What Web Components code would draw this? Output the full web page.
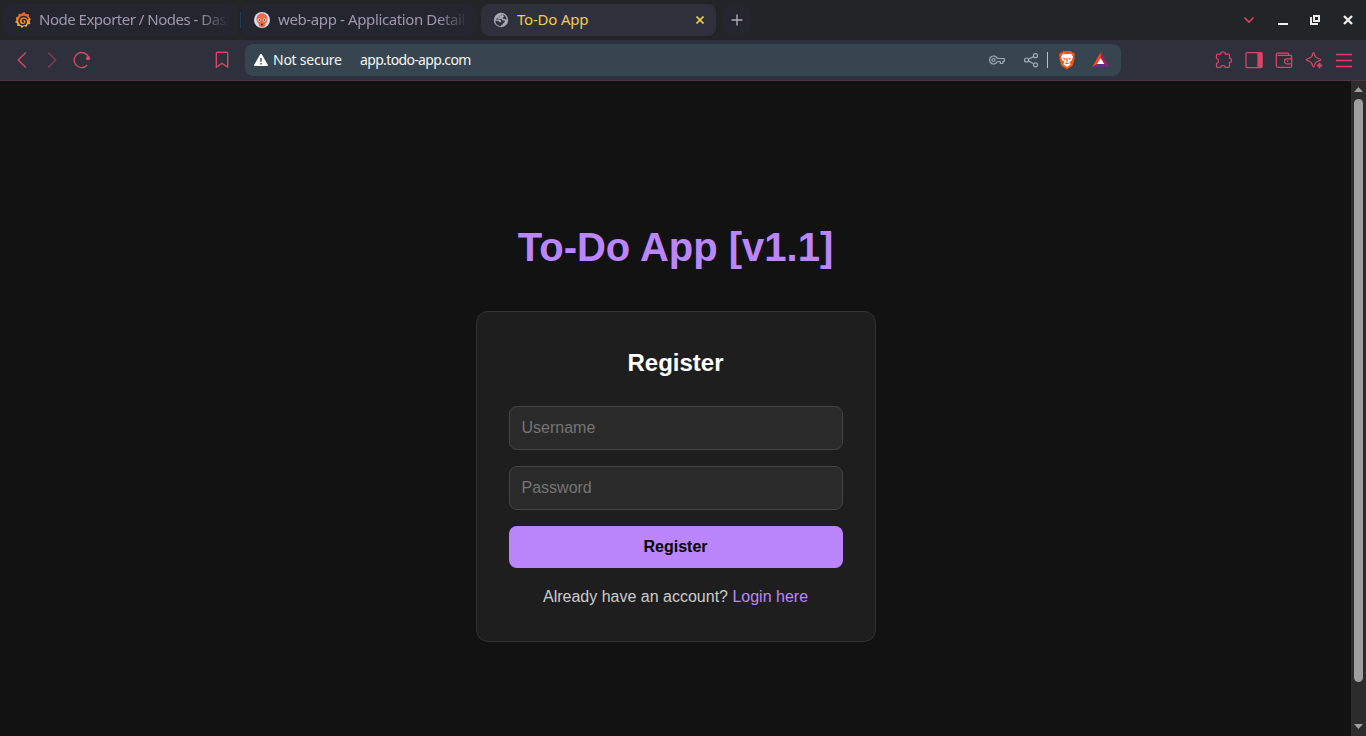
<!DOCTYPE html>
<html lang="en"><head><meta charset="utf-8"><title>To-Do App</title>
<style>
html,body{margin:0;height:100%;overflow:hidden;background:#121212}
</style></head><body>
<browser-window></browser-window>
<script>
const define=(name,html)=>{
  const t=document.createElement('template');t.innerHTML=html;
  customElements.define(name,class extends HTMLElement{
    constructor(){super();this.attachShadow({mode:'open'}).append(t.content.cloneNode(true));}
  });
};

define('tab-item',`<style>
:host{display:flex;align-items:center;box-sizing:border-box;width:235px;height:32px;border-radius:8px;background:#23262f;color:#a397ae;padding:0 9px 0 12px;font:15px/30px "Noto Sans",sans-serif}
:host([active]){background:#2e313c;color:#f0cb4c;padding-right:12px}
.icon{width:16px;height:16px;flex:none;margin-right:8px;display:block}
.title{flex:1;height:32px;overflow:hidden;white-space:nowrap;letter-spacing:var(--track,0)}
:host(:not([active])) .title{-webkit-mask-image:linear-gradient(90deg,#000 calc(100% - 30px),transparent)}
</style><span class="icon"><slot name="icon"></slot></span><span class="title"><slot></slot></span><slot name="close"></slot>`);

define('window-controls',`<style>:host{display:block;width:122px;height:40px;margin-left:auto}svg{display:block}</style>
<svg width="122" height="40" viewBox="1244 0 122 40" fill="none">
<path d="M1244.500 17.500l4.500 4.500 4.500-4.500" stroke="#db4468" stroke-width="1.600"/>
<path d="M1278 23h10v2h-10z" fill="#eee"/>
<path d="M1314 16h5v5h-5z" stroke="#eee" stroke-width="2"/><path d="M1311 17v7h7" stroke="#eee" stroke-width="2"/>
<path d="M1344 16l8 8M1352 16l-8 8" stroke="#eee" stroke-width="2.300"/></svg>`);

define('tab-strip',`<style>
:host{display:flex;align-items:center;height:40px;background:#212527;padding-left:3px;box-sizing:border-box}
.sep{width:1px;height:16px;background:#203e50;margin:0 1px 0 2px}
.gap{width:4px}
.new{width:28px;height:28px;margin-left:7px;border-radius:8px;background:#23262f}
svg{display:block}
</style>
<tab-item style="--track:-.5px"><svg slot="icon" width="16" height="16" viewBox="0 0 16 16"><defs><linearGradient id="g" x1="0" y1="0" x2="0" y2="1"><stop offset="0" stop-color="#f0502a"/><stop offset="1" stop-color="#fcc21b"/></linearGradient></defs>
<path fill="url(#g)" d="M7.500.800L9.600 0l1 2 3.400.3-.2 2.700L16 7l-1.300 2 .7 3-2.600.3-1.400 2.700-2.300-.9L6.800 16l-1.400-2-3.200.1.100-2.600L0 10.300l1.500-2.200L.8 5.400l2.500-.8.300-2.800 2.500.3z"/><path d="M13 7.200C11.800 4.200 7.500 3.400 5.200 6c-2.200 2.500-1 6.300 2.200 6.800 2.400.3 4.300-1.500 3.800-3.600-.6-2-3.500-2.200-3.800-.4-.1.900.8 1.500 1.600 1.100" fill="none" stroke="#23262f" stroke-width="1.500"/></svg>Node Exporter / Nodes - Dashboards</tab-item>
<span class="sep"></span>
<tab-item style="--track:-.38px"><svg slot="icon" width="16" height="16" viewBox="0 0 16 16"><circle cx="8" cy="8" r="8" fill="#d9dcee"/><path d="M2.500 7C2.500 3.500 5 1.200 8 1.200s5.500 2.300 5.500 5.800c0 2-1 3.600-2 4.500l-.5 2.800-3 1.200-3-1.200-.5-2.800C3.500 10.600 2.500 9 2.500 7z" fill="#ed6b45"/><circle cx="5.300" cy="8" r="1.700" fill="#f3c9c0"/><circle cx="10.700" cy="8" r="1.700" fill="#f3c9c0"/><circle cx="5.500" cy="8" r=".8" fill="#333"/><circle cx="10.500" cy="8" r=".8" fill="#333"/><path d="M6.500 11.700h3L8 14z" fill="#432b35"/></svg>web-app - Application Details Tree</tab-item>
<span class="gap"></span>
<tab-item active style="--track:-.2px"><svg slot="icon" width="16" height="16" viewBox="0 0 16 16"><circle cx="8" cy="8" r="7.200" fill="#a7aab3"/><path d="M9.500 2.300L8.300 3.800H6.500v1.700H5L4.600 7h3.600l1.500 1.600h2v1.600l-1.300.8-.8 1.700H8.200v1.600C5 14.100 2.500 12 2.300 8.700l3 .3 1.500 1.200h1.400V8.900L6.700 7.500H2.500M9.500 2.300c2.300.7 4 2.700 4.200 5.200h-1.200l-1-.8H9.800V5.200l1.500-.4z" fill="#2e313c"/></svg>To-Do App<svg slot="close" width="8" height="8" viewBox="0 0 8 8"><path d="M.5.500l7 7M7.500.500l-7 7" stroke="#f0cb4c" stroke-width="1.600"/></svg></tab-item>
<span class="new"><svg width="28" height="28"><path d="M14 8.500v11M8.500 14h11" stroke="#b1a5b9" stroke-width="1.400"/></svg></span>
<window-controls></window-controls>`);

define('address-bar',`<style>
:host{display:flex;align-items:center;width:876px;height:32px;box-sizing:border-box;margin-left:11px;padding-left:9px;border-radius:8px;background:#36454f;color:#f4f5f6;font:14px/32px "Noto Sans",sans-serif;white-space:nowrap}
.sec{width:87px;margin-left:5px;letter-spacing:-.25px}.url{letter-spacing:-.65px}.right{margin-left:auto}svg{display:block;flex:none}
</style>
<svg width="14" height="14" viewBox="0 0 14 14"><path d="M7 1.800L13 12.200H1z" fill="#fff" stroke="#fff" stroke-width="1.800" stroke-linejoin="round"/><path d="M7 5v3.800M7 10v1.500" stroke="#36454f" stroke-width="1.400"/></svg>
<span class="sec">Not secure</span><span class="url">app.todo-app.com</span>
<svg class="right" width="136" height="32" viewBox="985 44 136 32" fill="none">
<g stroke="#a3abb2" stroke-width="1.200"><path d="M997.300 58.500h7v3h-1.500v2h-2.500v-2h-3a4 4 0 1 1 0-3z" stroke-linejoin="round"/><circle cx="993.500" cy="60" r="1.500"/>
<circle cx="1026.500" cy="60" r="2"/><circle cx="1035.500" cy="55.700" r="2"/><circle cx="1035.500" cy="64.800" r="2"/><path d="M1028.300 59.200l5.300-2.600M1028.300 60.900l5.300 2.900"/></g>
<path d="M1047.500 52v16" stroke="#b8bec3"/>
<path d="M1063 51h8l1.500 1.800 1.500-.1 1 2.300-.8 2 .5 1.500-2 7-5.700 4-5.700-4-2-7 .5-1.500-.8-2 1-2.300 1.500.1z" fill="#fb5410"/><path d="M1063 53.700l4 .6 4-.6 2.100 3-1.400 3.800-2.300 1.500 1.400 2.200-3.800 2.900-3.800-2.900 1.400-2.200-2.300-1.500-1.400-3.800z" fill="#fff"/><path d="M1062.500 57.500l3 1-.7 1.800zM1071.500 57.500l-3 1 .7 1.800zM1066.400 58h1.200v4h-1.200zM1064.700 63.500l2.300-1 2.300 1-2.300.8z" fill="#fb5410"/>
<path d="M1100.800 52L1092 67.300l5.500-3.300 3.300-5.700z" fill="#ff4726"/><path d="M1100.800 52v6.300l3.200 5.700 5.500 3.300z" fill="#9e1f63"/><path d="M1092 67.300h17.500L1104 64h-6.500z" fill="#662d91"/><path d="M1100.800 58.300L1097 64h7.300z" fill="#fff"/></svg>`);

define('nav-buttons',`<style>:host{display:block;width:234px;height:40px}svg{display:block}</style>
<svg width="234" height="40" viewBox="0 40 234 40" fill="none" stroke="#db4468" stroke-width="1.400"><path d="M25.800 52.500L18.200 60l7.600 7.500"/><path d="M48.200 52.500l7.600 7.500-7.600 7.500" opacity=".5"/><path d="M88.600 57.300A7.500 7.500 0 1 0 87.300 65"/><circle cx="88.100" cy="58.200" r="2.100" fill="#db4468" stroke="none"/><path d="M217.300 52.300h9.400q1 0 1 1v14l-5.700-4-5.700 4v-14q0-1 1-1z" stroke-linejoin="round"/></svg>`);

define('toolbar-actions',`<style>:host{display:block;width:156px;height:40px;margin-left:auto}svg{display:block}</style>
<svg width="156" height="40" viewBox="1210 40 156 40" fill="none" stroke="#db4468" stroke-width="1.250" stroke-linejoin="round">
<path d="M1217.500 54h3.200c.2-2.700 4.400-2.700 4.600 0h3.200q1 0 1 1v3.200c2.600.2 2.600 4.200 0 4.500v3.600q0 1-1 1h-3.200c-.2-2.300-4.400-2.300-4.600 0h-3.200q-1 0-1-1v-2.800c2.700-.5 2.700-4.600 0-5v-3.500q0-1 1-1z"/>
<rect x="1246" y="52.700" width="15.800" height="14.800" rx="1"/><path d="M1258 53h4v14h-4z" fill="#db4468"/>
<path d="M1288.800 55.500v-1q0-1.300-1.300-1.300h-10q-1.200 0-1.200 1.200v11.200q0 1.700 1.700 1.700h12.300q1.400 0 1.400-1.400v-9q0-1.400-1.400-1.400h-12.800M1291.500 58.800h-4.500a2.500 2.500 0 0 0 0 5h4.500M1287 61.200h1.200"/>
<path d="M1313.500 52.500c.8 0 .9 1.800 1.400 3.200.7 1.700 1.700 2.200 3.500 2.800 1.500.5 2.500.7 2.500 1.200s-1 .8-2.500 1.300c-1.800.6-2.800 1.200-3.500 2.900-.5 1.400-.6 3-1.400 3s-.9-1.600-1.400-3c-.7-1.700-1.700-2.300-3.500-2.900-1.500-.5-2.500-.8-2.500-1.300s1-.7 2.500-1.200c1.800-.6 2.800-1.100 3.500-2.800.5-1.400.6-3.200 1.400-3.200z"/><path d="M1319.500 62.800v5.400M1316.800 65.500h5.400" stroke-width="1.800"/>
<path d="M1336 54.500h16M1336 60.500h16M1336 66.500h16" stroke-width="1.300"/></svg>`);

define('browser-toolbar',`<style>:host{display:flex;align-items:center;height:41px;box-sizing:border-box;background:#2e313c;border-bottom:1px solid #50344a}</style>
<nav-buttons></nav-buttons><address-bar></address-bar><toolbar-actions></toolbar-actions>`);

define('form-field',`<style>:host{display:block;box-sizing:border-box;height:44px;margin-bottom:16px;padding:0 12px;border:1px solid #444;border-radius:8px;background:#2a2a2a;color:#757575;font-size:16px;line-height:42px}</style><slot></slot>`);

define('register-card',`<style>
:host{display:block;box-sizing:border-box;width:400px;height:331px;padding:32px;border:1px solid #333;border-radius:12px;background:#1e1e1e;color:#ccc;text-align:center;font-size:16px}
h2{margin:5px 0 29px;color:#fff;font-size:24px;line-height:28px}
form-field{text-align:left}
button{display:block;width:100%;height:42px;padding:0;border:0;border-radius:8px;background:#bb86fc;color:#000;font:bold 16px "Liberation Sans",Arial,sans-serif}
p{margin:20px 0 0;line-height:18px}a{color:#bb86fc}
</style><h2>Register</h2><form-field>Username</form-field><form-field>Password</form-field><button type="button">Register</button><p>Already have an account? <a>Login here</a></p>`);

define('todo-page',`<style>
:host{display:flex;flex-direction:column;align-items:center;flex:1;background:#121212;font-family:"Liberation Sans",Arial,sans-serif}
h1{margin:143px 0 41px;color:#bb86fc;font-size:40px;line-height:46px}
</style><h1>To-Do App [v1.1]</h1><register-card></register-card>`);

define('scroll-bar',`<style>:host{display:flex;flex-direction:column;align-items:center;width:15px;background:#2c2c2c}
.thumb{width:9px;height:583px;border-radius:5px;background:#9f9f9f}svg{display:block}</style>
<svg width="15" height="18"><path d="M3 11h9L7.500 6z" fill="#9f9f9f"/></svg><span class="thumb"></span><svg width="15" height="54"><path d="M3 42h9l-4.500 5z" fill="#9f9f9f"/></svg>`);

define('browser-window',`<style>:host{display:flex;flex-direction:column;width:1366px;height:736px}main{display:flex;flex:1}</style>
<tab-strip></tab-strip><browser-toolbar></browser-toolbar><main><todo-page></todo-page><scroll-bar></scroll-bar></main>`);
</script></body></html>
